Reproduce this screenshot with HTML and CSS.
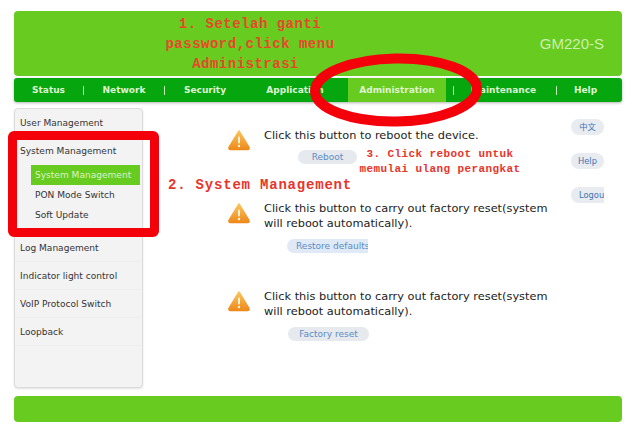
FILE: index.html
```html
<!DOCTYPE html>
<html lang="en">
<head>
  <meta charset="UTF-8">
  <title>GM220-S</title>
  <link rel="stylesheet" href="styles.css">
</head>
<body>
    <div class="page">
        <header class="top">
            <span class="model">GM220-S</span>
        </header>

        <nav class="menu">
            <div class="menu-item w-status">Status</div>
            <div class="menu-sep"></div>
            <div class="menu-item w-network">Network</div>
            <div class="menu-sep"></div>
            <div class="menu-item w-security">Security</div>
            <div class="menu-item w-app">Application</div>
            <div class="menu-item w-admin active">Administration</div>
            <div class="menu-sep gap-admin"></div>
            <div class="menu-item w-maint">Maintenance</div>
            <div class="menu-sep"></div>
            <div class="menu-item w-help">Help</div>
        </nav>

        <div class="main">
            <aside class="side">
                <div class="side-item">User Management</div>
                <div class="side-item open">System Management</div>
                <div class="side-sub">
                    <div class="sub-item selected">System Management</div>
                    <div class="sub-item">PON Mode Switch</div>
                    <div class="sub-item">Soft Update</div>
                </div>
                <div class="side-item">Log Management</div>
                <div class="side-item">Indicator light control</div>
                <div class="side-item">VoIP Protocol Switch</div>
                <div class="side-item">Loopback</div>
            </aside>

            <section class="content">
                <div class="notice first">
                    <svg class="warn" viewBox="0 0 24 22"><use href="#warn-icon"/></svg>
                    <div class="notice-body">
                        <p>Click this button to reboot the device.</p>
                        <div class="btn btn-reboot">Reboot</div>
                    </div>
                </div>
                <div class="notice second">
                    <svg class="warn" viewBox="0 0 24 22"><use href="#warn-icon"/></svg>
                    <div class="notice-body">
                        <p>Click this button to carry out factory reset(system will reboot automatically).</p>
                        <div class="btn btn-restore"><span>Restore defaults</span></div>
                    </div>
                </div>
                <div class="notice">
                    <svg class="warn" viewBox="0 0 24 22"><use href="#warn-icon"/></svg>
                    <div class="notice-body">
                        <p>Click this button to carry out factory reset(system will reboot automatically).</p>
                        <div class="btn btn-factory">Factory reset</div>
                    </div>
                </div>
            </section>

            <div class="tools">
                <div class="tool">中文</div>
                <div class="tool">Help</div>
                <div class="tool clip">Logou</div>
            </div>
        </div>

        <footer class="bottom"></footer>

        <!-- red marks drawn over the screenshot -->
        <div class="note note-1">1. Setelah ganti<br>password,click menu<br>Administrasi&nbsp;</div>
        <div class="note note-2">2. System Management</div>
        <div class="note note-3">3. Click reboot untuk<br>memulai ulang perangkat</div>
        <div class="red-box"></div>
        <svg class="red-ring" viewBox="0 0 182 80">
            <ellipse cx="91" cy="40" rx="81" ry="31.5" transform="rotate(-1 91 40)"/>
        </svg>
    </div>

    <svg class="defs" width="0" height="0">
        <defs>
            <linearGradient id="warn-fill" x1="0" y1="0" x2="0" y2="1">
                <stop offset="0" stop-color="#fbc45a"/>
                <stop offset="1" stop-color="#ee8a1c"/>
            </linearGradient>
            <g id="warn-icon">
                <path d="M12 2 L22 18.5 Q22.5 20.5 20.5 20.5 L3.5 20.5 Q1.5 20.5 2 18.5 Z" fill="url(#warn-fill)" stroke="url(#warn-fill)" stroke-width="1.5" stroke-linejoin="round"/>
                <rect x="11" y="7.5" width="2" height="7" rx="1" fill="#fff3d8"/>
                <circle cx="12" cy="17" r="1.2" fill="#fff3d8"/>
            </g>
        </defs>
    </svg>
</body>
</html>
```

FILE: styles.css
```css
body {
    margin: 0;
    background: #fff;
    font-family: 'DejaVu Sans', sans-serif;
}

.page {
    position: relative;
    width: 634px;
    height: 435px;
    padding: 11px 12px 0 14px;
    box-sizing: border-box;
    overflow: hidden;
}

.top {
    height: 65px;
    background: #68cb20;
    border-radius: 4px;
    display: flex;
    align-items: center;
    justify-content: flex-end;
    padding-right: 18px;
}

.model {
    font-family: 'Liberation Sans', sans-serif;
    font-size: 15px;
    color: #cdeeb0;
}

.menu {
    height: 24px;
    margin-top: 2px;
    background: #05a60e;
    border-radius: 3px;
    box-shadow: 0 1px 3px rgba(0,0,0,0.3);
    display: flex;
    align-items: center;
    color: #dff5d0;
    font-size: 9px;
    font-weight: bold;
}

.menu-item {
    height: 100%;
    display: flex;
    align-items: center;
    justify-content: center;
    flex-shrink: 0;
    box-sizing: border-box;
}

.menu-sep {
    width: 1px;
    height: 9px;
    background: #c8eeb8;
    flex-shrink: 0;
}

.w-status { width: 69px; }
.w-network { width: 80px; }
.w-security { width: 80px; }
.w-app { width: 103px; padding-right: 3px; }
.w-admin { width: 98px; }
.w-maint { width: 102px; padding-right: 3px; }
.w-help { width: 67px; padding-right: 10px; }

.gap-admin { margin-left: 7px; }

.menu-item.active {
    background: #68cb20;
}

.main {
    display: flex;
    margin-top: 6px;
    height: 280px;
}

.side {
    width: 129px;
    flex-shrink: 0;
    box-sizing: border-box;
    background: #f3f3f3;
    border: 1px solid #dcdcdc;
    border-radius: 4px;
    box-shadow: 0 1px 2px rgba(0,0,0,0.12);
    font-size: 9.05px;
    color: #333;
}

.side-item {
    height: 28px;
    line-height: 28px;
    padding-left: 5px;
    border-bottom: 1px solid #f0eeee;
    box-sizing: border-box;
}

.side-item.open {
    border-bottom: none;
    height: 26px;
}

.side-sub {
    padding: 2px 2px 9px 16px;
}

.sub-item {
    height: 20px;
    line-height: 20px;
    padding-left: 4px;
}

.sub-item.selected {
    background: #68cb20;
    color: #d8f3c4;
}

.content {
    width: 412px;
    flex-shrink: 0;
    padding: 20px 0 0 85px;
    box-sizing: border-box;
    font-size: 11.35px;
    color: #222;
}

.notice {
    display: flex;
    gap: 12px;
    min-height: 88px;
}

.notice.first {
    min-height: 73px;
}

.warn {
    width: 24px;
    height: 22px;
    flex-shrink: 0;
    margin: 1px 1px 0 -1px;
}

.notice-body {
    flex: 1;
}

.notice-body p {
    margin: 0;
    line-height: 15px;
}

.btn {
    height: 14px;
    line-height: 14px;
    font-size: 9px;
    color: #5b8cc4;
    background: #e6e9ee;
    border-radius: 7px;
    text-align: center;
    box-sizing: border-box;
}

.btn-reboot {
    width: 59px;
    margin: 7px 0 0 34px;
}

.btn-restore {
    width: 81px;
    margin: 8px 0 0 23px;
    background: #dfeaf6;
    border-radius: 7px 0 0 7px;
    overflow: hidden;
    white-space: nowrap;
    padding-left: 9px;
    text-align: left;
}

.btn-factory {
    width: 81px;
    margin: 8px 0 0 24px;
}

.tools {
    width: 33px;
    margin-left: 16px;
    padding-top: 11px;
    display: flex;
    flex-direction: column;
    gap: 18px;
}

.tool {
    height: 16px;
    line-height: 16px;
    background: #e8ebef;
    border-radius: 8px;
    color: #3f74b5;
    font-size: 8.3px;
    font-family: 'DejaVu Sans', 'Noto Sans CJK SC', sans-serif;
    text-align: center;
    white-space: nowrap;
}

.tool.clip {
    text-align: left;
    padding-left: 8px;
    border-radius: 8px 0 0 8px;
}

.bottom {
    height: 26px;
    margin-top: 8px;
    background: #68cb20;
    border-radius: 4px;
}

.note {
    position: absolute;
    font-family: 'Liberation Mono', monospace;
    font-weight: bold;
    white-space: nowrap;
    color: #e8352b;
}

.note-1 {
    left: 100px;
    top: 14px;
    width: 300px;
    text-align: center;
    font-size: 14px;
    letter-spacing: 0.5px;
    line-height: 20px;
    color: #e9472a;
}

.note-2 {
    left: 168px;
    top: 177px;
    font-size: 14px;
    letter-spacing: 0.8px;
}

.note-3 {
    left: 340px;
    top: 147px;
    width: 200px;
    text-align: center;
    font-size: 11px;
    letter-spacing: 0.4px;
    line-height: 15px;
}

.red-box {
    position: absolute;
    left: 8px;
    top: 131px;
    width: 151px;
    height: 106px;
    box-sizing: border-box;
    border: 9px solid #f4000b;
    border-radius: 6px;
}

.red-ring {
    position: absolute;
    left: 305px;
    top: 50px;
    width: 182px;
    height: 80px;
}

.red-ring ellipse {
    fill: none;
    stroke: #f4000b;
    stroke-width: 10;
}

.defs {
    position: absolute;
}
```
